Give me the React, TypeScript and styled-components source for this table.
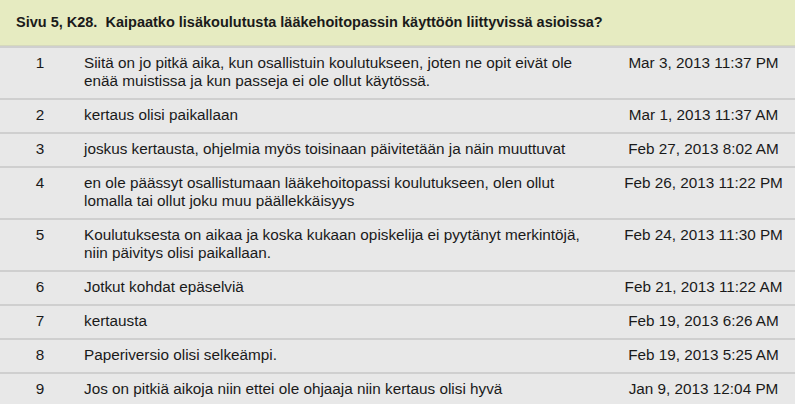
import React from 'react';
import styled, { createGlobalStyle } from 'styled-components';

type Answer = {
  id: number;
  text: string;
  date: string;
};

const answers: Answer[] = [
  {
    id: 1,
    text: 'Siitä on jo pitkä aika, kun osallistuin koulutukseen, joten ne opit eivät ole enää muistissa ja kun passeja ei ole ollut käytössä.',
    date: 'Mar 3, 2013 11:37 PM',
  },
  { id: 2, text: 'kertaus olisi paikallaan', date: 'Mar 1, 2013 11:37 AM' },
  {
    id: 3,
    text: 'joskus kertausta, ohjelmia myös toisinaan päivitetään ja näin muuttuvat',
    date: 'Feb 27, 2013 8:02 AM',
  },
  {
    id: 4,
    text: 'en ole päässyt osallistumaan lääkehoitopassi koulutukseen, olen ollut lomalla tai ollut joku muu päällekkäisyys',
    date: 'Feb 26, 2013 11:22 PM',
  },
  {
    id: 5,
    text: 'Koulutuksesta on aikaa ja koska kukaan opiskelija ei pyytänyt merkintöjä, niin päivitys olisi paikallaan.',
    date: 'Feb 24, 2013 11:30 PM',
  },
  { id: 6, text: 'Jotkut kohdat epäselviä', date: 'Feb 21, 2013 11:22 AM' },
  { id: 7, text: 'kertausta', date: 'Feb 19, 2013 6:26 AM' },
  { id: 8, text: 'Paperiversio olisi selkeämpi.', date: 'Feb 19, 2013 5:25 AM' },
  {
    id: 9,
    text: 'Jos on pitkiä aikoja niin ettei ole ohjaaja niin kertaus olisi hyvä',
    date: 'Jan 9, 2013 12:04 PM',
  },
];

const GlobalStyle = createGlobalStyle`
  body {
    margin: 0;
    background: #e8e8e8;
    font-family: "Liberation Sans", Arial, sans-serif;
  }
`;

const App = () => {
  return (
    <>
      <GlobalStyle />
      <Table>
        <Header>Sivu 5, K28.{'  '}Kaipaatko lisäkoulutusta lääkehoitopassin käyttöön liittyvissä asioissa?</Header>
        {answers.map(answer => (
          <Row key={answer.id}>
            <Num>{answer.id}</Num>
            <Comment>{answer.text}</Comment>
            <DateCell>{answer.date}</DateCell>
          </Row>
        ))}
      </Table>
    </>
  );
};

export default App;

const Table = styled.div`
  display: flex;
  flex-direction: column;
  width: 795px;
  color: #1a1a1a;
  font-size: 15.3px;
  line-height: 18px;
`;

const Header = styled.div`
  height: 46px;
  display: flex;
  align-items: center;
  padding: 0 16px 2px;
  box-sizing: border-box;
  background-color: #e6ebc1;
  border-bottom: 1px solid #d6d9bc;

  font-size: 14.5px;
  font-weight: bold;
  white-space: pre;
`;

const Row = styled.div`
  display: grid;
  grid-template-columns: 80px 532px 1fr;
  align-items: start;

  padding: 6px 0 8px;
  background-color: #e8e8e8;
  border-top: 2px solid #cfcfcf;
`;

const Num = styled.div`
  text-align: center;
`;

const Comment = styled.div`
  padding: 0 16px 0 4px;
`;

const DateCell = styled.div`
  text-align: center;
  white-space: nowrap;
`;
